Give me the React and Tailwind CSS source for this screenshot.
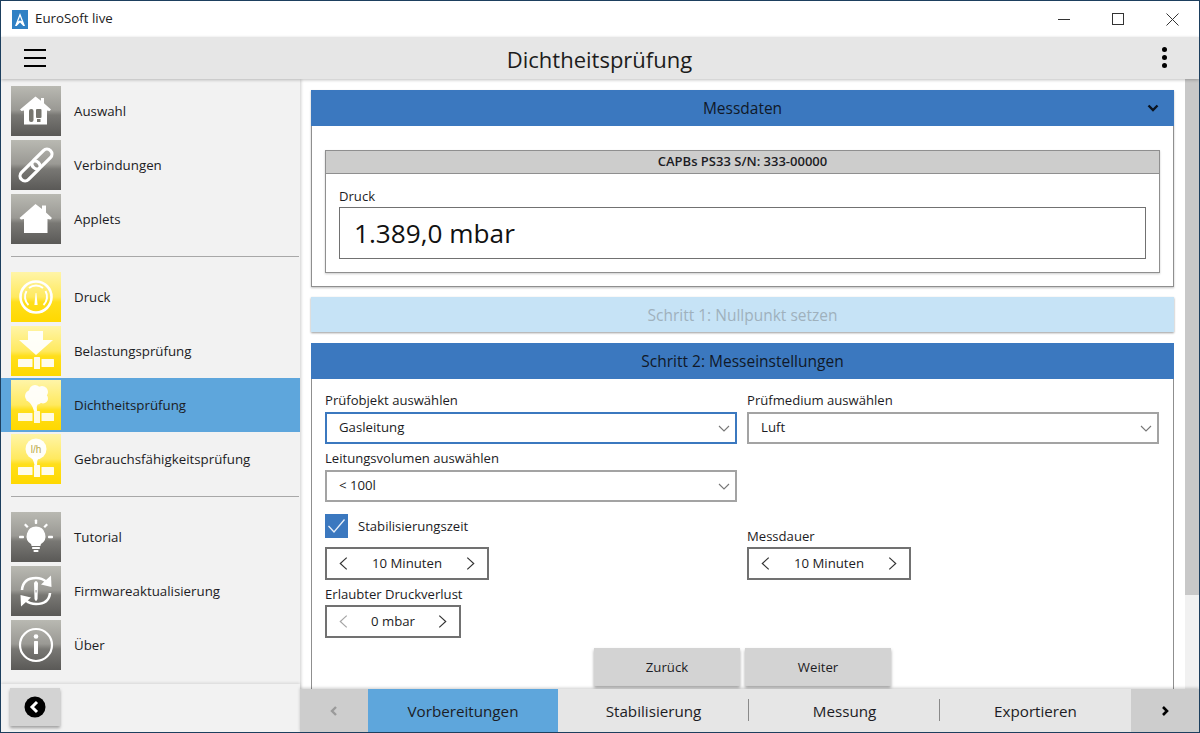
import React from "react";

const gray = "bg-[linear-gradient(180deg,#b9b9b2_0%,#9a9994_48%,#797874_58%,#5a5957_100%)]";
const yellow = "bg-[linear-gradient(180deg,#fff5a8_0%,#ffe95f_50%,#ffdf1c_60%,#ffd800_100%)]";

function Tile({ kind, children }) {
  return (
    <div className={`w-[50px] h-[50px] shrink-0 ${kind === "y" ? yellow : gray}`}>
      <svg viewBox="0 0 50 50" width="50" height="50">{children}</svg>
    </div>
  );
}

const Pipe = () => (
  <g fill="#fff" opacity="0.92">
    <rect x="7" y="33" width="14.5" height="8" rx="0.5" />
    <rect x="23" y="31" width="6" height="12" rx="0.5" />
    <rect x="30.5" y="33" width="12.5" height="8" rx="0.5" />
  </g>
);

const icons = {
  auswahl: (
    <g>
      <path d="M24.5 10.5 L30 14.8 V12 H33 V17.2 L40 23.5 L38.5 25 L36 24.5 V38.5 H13 V24.5 L10.5 25 L9 23.5 Z" fill="#fff" />
      <rect x="18" y="23" width="4.5" height="13" rx="2" fill="#77766f" />
      <rect x="25" y="23" width="5.5" height="9" rx="1" fill="#77766f" />
      <rect x="26" y="33" width="3.5" height="3" fill="#77766f" />
    </g>
  ),
  link: (
    <g fill="none" stroke="#fff" strokeWidth="3.2">
      <rect x="19" y="14" width="24" height="10" rx="5" transform="rotate(-45 31 19)" />
      <rect x="7" y="26" width="24" height="10" rx="5" transform="rotate(-45 19 31)" />
    </g>
  ),
  home: <path d="M24.5 10 L31 15 V11.5 H35 V18.5 L41 24 L39.5 25.5 L36.5 25 V39 H13 V25 L10 25.5 L8.5 24 Z" fill="#fff" />,
  druck: (
    <g>
      <circle cx="25" cy="25" r="15.5" fill="none" stroke="#fff" strokeWidth="2.6" />
      <g fill="none" stroke="#fff" strokeWidth="2">
        <path d="M17.5 33 A11.5 11.5 0 0 1 15.5 19" />
        <path d="M18 16 A11.5 11.5 0 0 1 32 16" />
        <path d="M34.5 19 A11.5 11.5 0 0 1 32.5 33" />
      </g>
      <path d="M24.6 21 H25.4 L26.6 33 H23.4 Z" fill="#fff" />
    </g>
  ),
  belastung: (
    <g>
      <path d="M17 5 H32 V14 H42 L25 29 L8 14 H17 Z" fill="#fff" opacity="0.95" />
      <Pipe />
    </g>
  ),
  dicht: (
    <g fill="#fff" opacity="0.95">
      <circle cx="24" cy="11" r="6" />
      <circle cx="31" cy="12" r="6" />
      <circle cx="32" cy="18.5" r="5" />
      <circle cx="20" cy="16" r="6" />
      <circle cx="26" cy="19" r="5.5" />
      <path d="M15 20 Q21 23 23 31 L26 31 Q25 27 27 23 L22 18 Z" />
      <Pipe />
    </g>
  ),
  gebrauch: (
    <g>
      <circle cx="25" cy="15" r="10.5" fill="#fff" opacity="0.95" />
      <path d="M18 21 Q22 24 23.5 31 H26 Q25.5 27 28 23 Z" fill="#fff" opacity="0.95" />
      <text x="25" y="19" textAnchor="middle" fontSize="10" fill="#b9a94a" fontFamily="'Liberation Sans',sans-serif">l/h</text>
      <Pipe />
    </g>
  ),
  tutorial: (
    <g fill="#fff">
      <path d="M25 14.5 A9.5 9.5 0 0 1 30 32 Q29.5 33 29.5 34 H20.5 Q20.5 33 20 32 A9.5 9.5 0 0 1 25 14.5 Z" />
      <rect x="21" y="35" width="8" height="2" rx="0.8" />
      <rect x="22.5" y="38" width="5" height="2" rx="0.8" />
      <rect x="23.8" y="7.5" width="2.4" height="4.5" rx="0.8" />
      <rect x="8" y="23.8" width="5" height="2.4" rx="0.8" />
      <rect x="37" y="23.8" width="5" height="2.4" rx="0.8" />
      <path d="M13 13 L14.6 11.4 L17.6 14.4 L16 16 Z M37 13 L35.4 11.4 L32.4 14.4 L34 16 Z" />
    </g>
  ),
  firmware: (
    <g>
      <path d="M11 24 Q12 12 25 12 Q31 12 35 15.5" fill="none" stroke="#fff" strokeWidth="2.6" />
      <path d="M40 9.5 L40.5 21 L30 18.5 Z" fill="#fff" />
      <path d="M39 27 Q38 38 25 38 Q19 38 15 34.5" fill="none" stroke="#fff" strokeWidth="2.6" />
      <path d="M10 40.5 L9.5 29 L20 31.5 Z" fill="#fff" />
      <path d="M23 17 Q25 13 27 17 L26.5 33 Q25 37 23.5 33 Z" fill="#fff" />
      <rect x="24.6" y="24" width="0.9" height="2.5" fill="#888" />
    </g>
  ),
  info: (
    <g fill="#fff">
      <circle cx="25" cy="25" r="16" fill="none" stroke="#fff" strokeWidth="2.2" />
      <circle cx="25" cy="16.5" r="2.3" />
      <rect x="23" y="21" width="4" height="13" rx="0.5" />
    </g>
  ),
};

function NavItem({ kind, icon, label, active }) {
  return (
    <div className={`flex items-center h-[54px] pl-[10px] ${active ? "bg-[#5ea6dc]" : ""}`}>
      <Tile kind={kind}>{icons[icon]}</Tile>
      <span className="ml-[13px] mt-[2px] text-[13.3px] text-[#1c1c24]">{label}</span>
    </div>
  );
}

const Divider = ({ className = "" }) => <div className={`h-px ml-[10px] w-[288px] bg-[#a8a8a8] ${className}`} />;

const Chev = ({ dir = "down", color = "#555", size = 14, w = 1.1, className = "" }) => {
  const pts = { down: "2,5 7,10 12,5", left: "10,1.5 4,7 10,12.5", right: "4,1.5 10,7 4,12.5", up: "2,9 7,4 12,9" }[dir];
  return (
    <svg viewBox="0 0 14 14" width={size} height={size} className={className}>
      <polyline points={pts} fill="none" stroke={color} strokeWidth={w} />
    </svg>
  );
};

function Select({ value, focused }) {
  return (
    <div className={`h-[32px] border-2 ${focused ? "border-[#3b78bf]" : "border-[#a3a3a3]"} bg-white flex items-center justify-between pl-[12px] pr-[4px] text-[13.2px]`}>
      <span>{value}</span>
      <Chev color="#777" />
    </div>
  );
}

function Stepper({ value, w, dim }) {
  return (
    <div className={`${w} h-[33px] border-2 border-[#717171] bg-white flex items-center justify-between px-[9px] text-[13.2px]`}>
      <Chev dir="left" size={15} color={dim ? "#a5a5a5" : "#333"} />
      <span>{value}</span>
      <Chev dir="right" size={15} color="#333" />
    </div>
  );
}

const Label = ({ children, className = "" }) => <div className={`h-[22px] text-[13.1px] ${className}`}>{children}</div>;

const Tab = ({ children, active, w, sep }) => (
  <div className={`${w} h-full flex items-center justify-center pt-[2px] text-[15.2px] relative ${active ? "bg-[#5ea6dc]" : ""}`}>
    {children}
    {sep && <div className="absolute right-0 top-[10px] h-[22px] w-px bg-[#8a8a8a]" />}
  </div>
);

export default function App() {
  return (
    <div className="w-[1200px] h-[733px] overflow-hidden border border-[#1d3f5e] bg-white flex flex-col text-[#1c1c24] font-['Open_Sans','Noto_Sans',sans-serif]">
      {/* title bar */}
      <div className="h-[36px] shrink-0 flex items-center bg-white">
        <svg width="16" height="19" viewBox="0 0 16 19" className="ml-[11px]">
          <rect width="16" height="19" fill="#2f80c4" />
          <path d="M8 3 L13 16 H11.3 L8 12.5 L4.7 16 H3 Z M8 6.5 L6.2 11.3 L8 10.4 L9.8 11.3 Z" fill="#fff" fillRule="evenodd" />
        </svg>
        <span className="ml-[7px] text-[13.3px] text-[#222]">EuroSoft live</span>
        <div className="ml-auto flex items-center">
          <div className="w-[12px] h-px bg-[#333] mr-[42px]" />
          <div className="w-[12px] h-[12px] border border-[#333] mr-[42px]" />
          <svg width="13" height="13" viewBox="0 0 13 13" className="mr-[20px]">
            <path d="M0.5 0.5 L12.5 12.5 M12.5 0.5 L0.5 12.5" stroke="#333" strokeWidth="1" />
          </svg>
        </div>
      </div>
      {/* header */}
      <div className="h-[42px] shrink-0 bg-[#e6e6e6] flex items-center relative z-20 shadow-[0_1px_3px_rgba(0,0,0,0.25)]">
        <div className="ml-[23px] mb-[1px] w-[22px] flex flex-col gap-[6px]">
          <div className="h-[2px] bg-black" />
          <div className="h-[2px] bg-black" />
          <div className="h-[2px] bg-black" />
        </div>
        <div className="flex-1 text-center text-[22px] pr-[9px] pt-[2px] text-[#1c1c1c]">Dichtheitsprüfung</div>
        <div className="mr-[32px] mb-[1px] flex flex-col gap-[3px]">
          <div className="w-[5px] h-[5px] rounded-full bg-black" />
          <div className="w-[5px] h-[5px] rounded-full bg-black" />
          <div className="w-[5px] h-[5px] rounded-full bg-black" />
        </div>
      </div>
      {/* body */}
      <div className="flex-1 flex min-h-0">
        {/* sidebar */}
        <aside className="w-[299px] shrink-0 bg-[#f2f2f2] flex flex-col relative z-10 shadow-[1px_0_3px_rgba(0,0,0,0.2)]">
          <div className="pt-[5px]">
            <NavItem icon="auswahl" label="Auswahl" />
            <NavItem icon="link" label="Verbindungen" />
            <NavItem icon="home" label="Applets" />
          </div>
          <Divider className="mt-[10px]" />
          <div className="mt-[13px]">
            <NavItem kind="y" icon="druck" label="Druck" />
            <NavItem kind="y" icon="belastung" label="Belastungsprüfung" />
            <NavItem kind="y" icon="dicht" label="Dichtheitsprüfung" active />
            <NavItem kind="y" icon="gebrauch" label="Gebrauchsfähigkeitsprüfung" />
          </div>
          <Divider className="mt-[10px]" />
          <div className="mt-[13px]">
            <NavItem icon="tutorial" label="Tutorial" />
            <NavItem icon="firmware" label="Firmwareaktualisierung" />
            <NavItem icon="info" label="Über" />
          </div>
          <div className="mt-auto h-[48px] bg-[#f2f2f2] shadow-[0_-1px_3px_rgba(0,0,0,0.12)] pl-[9px] pt-[4px]">
            <div className="w-[50px] h-[38px] bg-[#d3d3d3] shadow-[0_2px_3px_rgba(0,0,0,0.35)] flex items-center justify-center">
              <svg width="22" height="22" viewBox="0 0 22 22">
                <circle cx="11" cy="11" r="10.5" fill="#000" />
                <polyline points="13,6 8,11 13,16" fill="none" stroke="#fff" strokeWidth="3" />
              </svg>
            </div>
          </div>
        </aside>
        {/* right */}
        <div className="flex-1 flex flex-col min-w-0">
          <div className="flex-1 min-h-0 flex overflow-hidden">
            <main className="flex-1 min-w-0 pl-[11px] pr-[11px] pt-[11px] overflow-hidden">
              {/* Messdaten */}
              <section className="shadow-[0_1px_2px_rgba(0,0,0,0.25)]">
                <div className="h-[36px] bg-[#3b78bf] flex items-center justify-center pt-[2px] relative text-[15.5px] text-[#101828]">
                  Messdaten
                  <svg width="12" height="9" viewBox="0 0 12 9" className="absolute right-[15px] top-[14px]">
                    <polyline points="1.5,1.5 6,6 10.5,1.5" fill="none" stroke="#0b1420" strokeWidth="2.4" />
                  </svg>
                </div>
                <div className="border-x border-b border-[#8f8f8f] bg-white h-[161px] px-[13px] pt-[24px]">
                  <div className="border border-[#8f8f8f] h-[123px] shadow-[0_1px_2px_rgba(0,0,0,0.2)]">
                    <div className="h-[23px] bg-[#cdcdcc] border-b border-[#8f8f8f] flex items-center justify-center text-[13px] font-semibold">
                      CAPBs PS33 S/N: 333-00000
                    </div>
                    <div className="px-[13px]">
                      <Label className="mt-[11px] leading-[22px]">Druck</Label>
                      <div className="h-[52px] border border-[#717171] flex items-center pl-[14px] pt-[1px] text-[26.2px] text-[#111]">
                        1.389,0 mbar
                      </div>
                    </div>
                  </div>
                </div>
              </section>
              {/* Schritt 1 */}
              <div className="mt-[10px] h-[35px] bg-[#c6e3f6] shadow-[0_1px_2px_rgba(0,0,0,0.4)] flex items-center justify-center pt-[2px] text-[15.5px] text-[#9fb1bd]">
                Schritt 1: Nullpunkt setzen
              </div>
              {/* Schritt 2 */}
              <section className="mt-[11px]">
                <div className="h-[36px] bg-[#3b78bf] flex items-center justify-center pt-[2px] text-[15.5px] text-[#101828]">
                  Schritt 2: Messeinstellungen
                </div>
                <div className="border-x border-[#8f8f8f] bg-white h-[340px] px-[13px] pt-[11px]">
                  <div className="grid grid-cols-[412px_412px] gap-x-[10px]">
                    <div>
                      <Label className="leading-[20px]">Prüfobjekt auswählen</Label>
                      <Select value="Gasleitung" focused />
                      <Label className="mt-[4px] leading-[20px]">Leitungsvolumen auswählen</Label>
                      <Select value="< 100l" />
                      <div className="mt-[12px] flex items-center h-[24px]">
                        <div className="w-[23px] h-[24px] bg-[#3b78bf] flex items-center justify-center">
                          <svg width="19" height="16" viewBox="0 0 19 16">
                            <polyline points="1.5,8 7,14 17.5,1.5" fill="none" stroke="#e8f0fa" strokeWidth="1.3" />
                          </svg>
                        </div>
                        <span className="ml-[10px] mt-[1px] text-[13.1px]">Stabilisierungszeit</span>
                      </div>
                      <div className="mt-[9px]"><Stepper value="10 Minuten" w="w-[164px]" /></div>
                      <Label className="mt-[3px] leading-[22px]">Erlaubter Druckverlust</Label>
                      <Stepper value="0 mbar" w="w-[136px]" dim />
                    </div>
                    <div>
                      <Label className="leading-[20px]">Prüfmedium auswählen</Label>
                      <Select value="Luft" />
                      <Label className="mt-[81px] leading-[22px]">Messdauer</Label>
                      <Stepper value="10 Minuten" w="w-[164px]" />
                    </div>
                  </div>
                  <div className="mt-[10px] flex gap-[5px] pl-[269px]">
                    <div className="w-[146px] h-[38px] bg-[#d3d3d3] shadow-[0_2px_3px_rgba(0,0,0,0.35)] flex items-center justify-center pt-[2px] text-[13.2px]">Zurück</div>
                    <div className="w-[146px] h-[38px] bg-[#d3d3d3] shadow-[0_2px_3px_rgba(0,0,0,0.35)] flex items-center justify-center pt-[2px] text-[13.2px]">Weiter</div>
                  </div>
                </div>
              </section>
            </main>
            {/* scrollbar */}
            <div className="w-[14px] shrink-0 bg-[#f1f1f1]">
              <div className="h-[516px] bg-[#c8c8c8]" />
            </div>
          </div>
          {/* tabs */}
          <div className="h-[43px] shrink-0 bg-[#e6e6e6] flex items-stretch relative z-10 shadow-[0_-1px_3px_rgba(0,0,0,0.2)]">
            <div className="w-[68px] bg-[#cdcdcd] flex items-center justify-center">
              <svg width="10" height="12" viewBox="0 0 10 12"><polyline points="7,2 3,6 7,10" fill="none" stroke="#9a9a9a" strokeWidth="2.4" /></svg>
            </div>
            <Tab w="w-[190px]" active>Vorbereitungen</Tab>
            <Tab w="w-[191px]" sep>Stabilisierung</Tab>
            <Tab w="w-[191px]" sep>Messung</Tab>
            <Tab w="w-[191px]">Exportieren</Tab>
            <div className="flex-1 bg-[#cdcdcd] flex items-center justify-center">
              <svg width="10" height="12" viewBox="0 0 10 12"><polyline points="3,2 7,6 3,10" fill="none" stroke="#000" strokeWidth="2.6" /></svg>
            </div>
          </div>
        </div>
      </div>
    </div>
  );
}
